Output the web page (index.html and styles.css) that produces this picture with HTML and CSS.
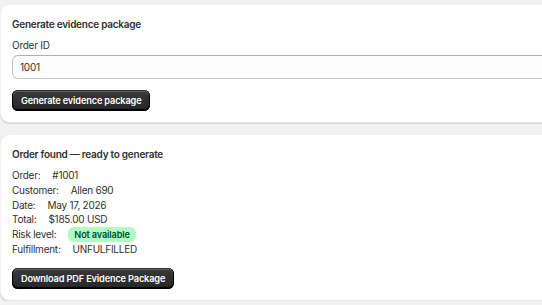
FILE: index.html
```html
<!DOCTYPE html>
<html lang="en">
<head>
    <meta charset="UTF-8">
    <meta name="viewport" content="width=device-width, initial-scale=1.0">
    <title>Evidence package</title>
    <link rel="stylesheet" href="styles.css">
</head>
<body>
    <div id="page">
        <div class="card">
            <h2 class="card-title">Generate evidence package</h2>
            <label class="field-label" for="order-id">Order ID</label>
            <input id="order-id" class="text-field" type="text" value="1001">
            <button class="btn-primary" id="generate">Generate evidence package</button>
        </div>

        <div class="card">
            <h2 class="card-title">Order found — ready to generate</h2>
            <div class="details">
                <div class="row"><span class="key">Order:</span><span>#1001</span></div>
                <div class="row"><span class="key">Customer:</span><span>Allen 690</span></div>
                <div class="row"><span class="key">Date:</span><span>May 17, 2026</span></div>
                <div class="row"><span class="key">Total:</span><span>$185.00 USD</span></div>
                <div class="row"><span class="key">Risk level:</span><span class="badge">Not available</span></div>
                <div class="row"><span class="key">Fulfillment:</span><span>UNFULFILLED</span></div>
            </div>
            <button class="btn-primary" id="download">Download PDF Evidence Package</button>
        </div>
    </div>
</body>
</html>
```

FILE: styles.css
```css
html, body {
    overflow: hidden;
}

body {
    font-family: Inter, "Noto Sans", sans-serif;
    font-size: 10px;
    line-height: 15px;
    letter-spacing: -0.25px;
    color: #303030;
    margin: 0;
    background-color: #f1f1f1;
}

#page {
    padding-top: 5px;
    display: flex;
    flex-direction: column;
    gap: 12px;
}

.card {
    width: calc(100% + 40px);
    box-sizing: border-box;
    background-color: #fff;
    border-radius: 9px;
    padding: 12px;
    display: flex;
    flex-direction: column;
    align-items: flex-start;
    box-shadow: 0 1px 0 0 rgba(26, 26, 26, 0.12), inset 0 -1px 0 0 rgba(0, 0, 0, 0.1), inset 1px 0 0 0 rgba(0, 0, 0, 0.05);
}

.card-title {
    font-size: 10px;
    line-height: 15px;
    font-weight: 600;
    margin: 0 0 6px;
}

.field-label {
    margin-bottom: 2px;
}

.text-field {
    width: 100%;
    box-sizing: border-box;
    height: 24px;
    padding: 0 7px;
    font-family: inherit;
    font-size: 10px;
    letter-spacing: -0.25px;
    color: #303030;
    background-color: #fdfdfd;
    border: 1px solid #c4c4c4;
    border-top-color: #aeaeae;
    border-radius: 6px;
    margin-bottom: 11px;
}

.details {
    margin-bottom: 11px;
}

.row {
    display: flex;
    align-items: center;
    gap: 12px;
    line-height: 14.8px;
}

.badge {
    background-color: #affebf;
    color: #014b40;
    font-size: 9.2px;
    font-weight: 600;
    letter-spacing: -0.15px;
    border-radius: 6px;
    padding: 0 6px;
    line-height: 15px;
}

.btn-primary {
    font-family: inherit;
    font-size: 9.2px;
    font-weight: 600;
    letter-spacing: -0.15px;
    line-height: 15px;
    color: #fff;
    padding: 3px 9px;
    border: none;
    border-radius: 6px;
    cursor: pointer;
    background: linear-gradient(#3a3a3a, #262626);
    box-shadow: inset 0 -1px 0 1px #000, inset 0 0 0 1px #303030, inset 0 1px 0 1px rgba(255, 255, 255, 0.2);
}
```
